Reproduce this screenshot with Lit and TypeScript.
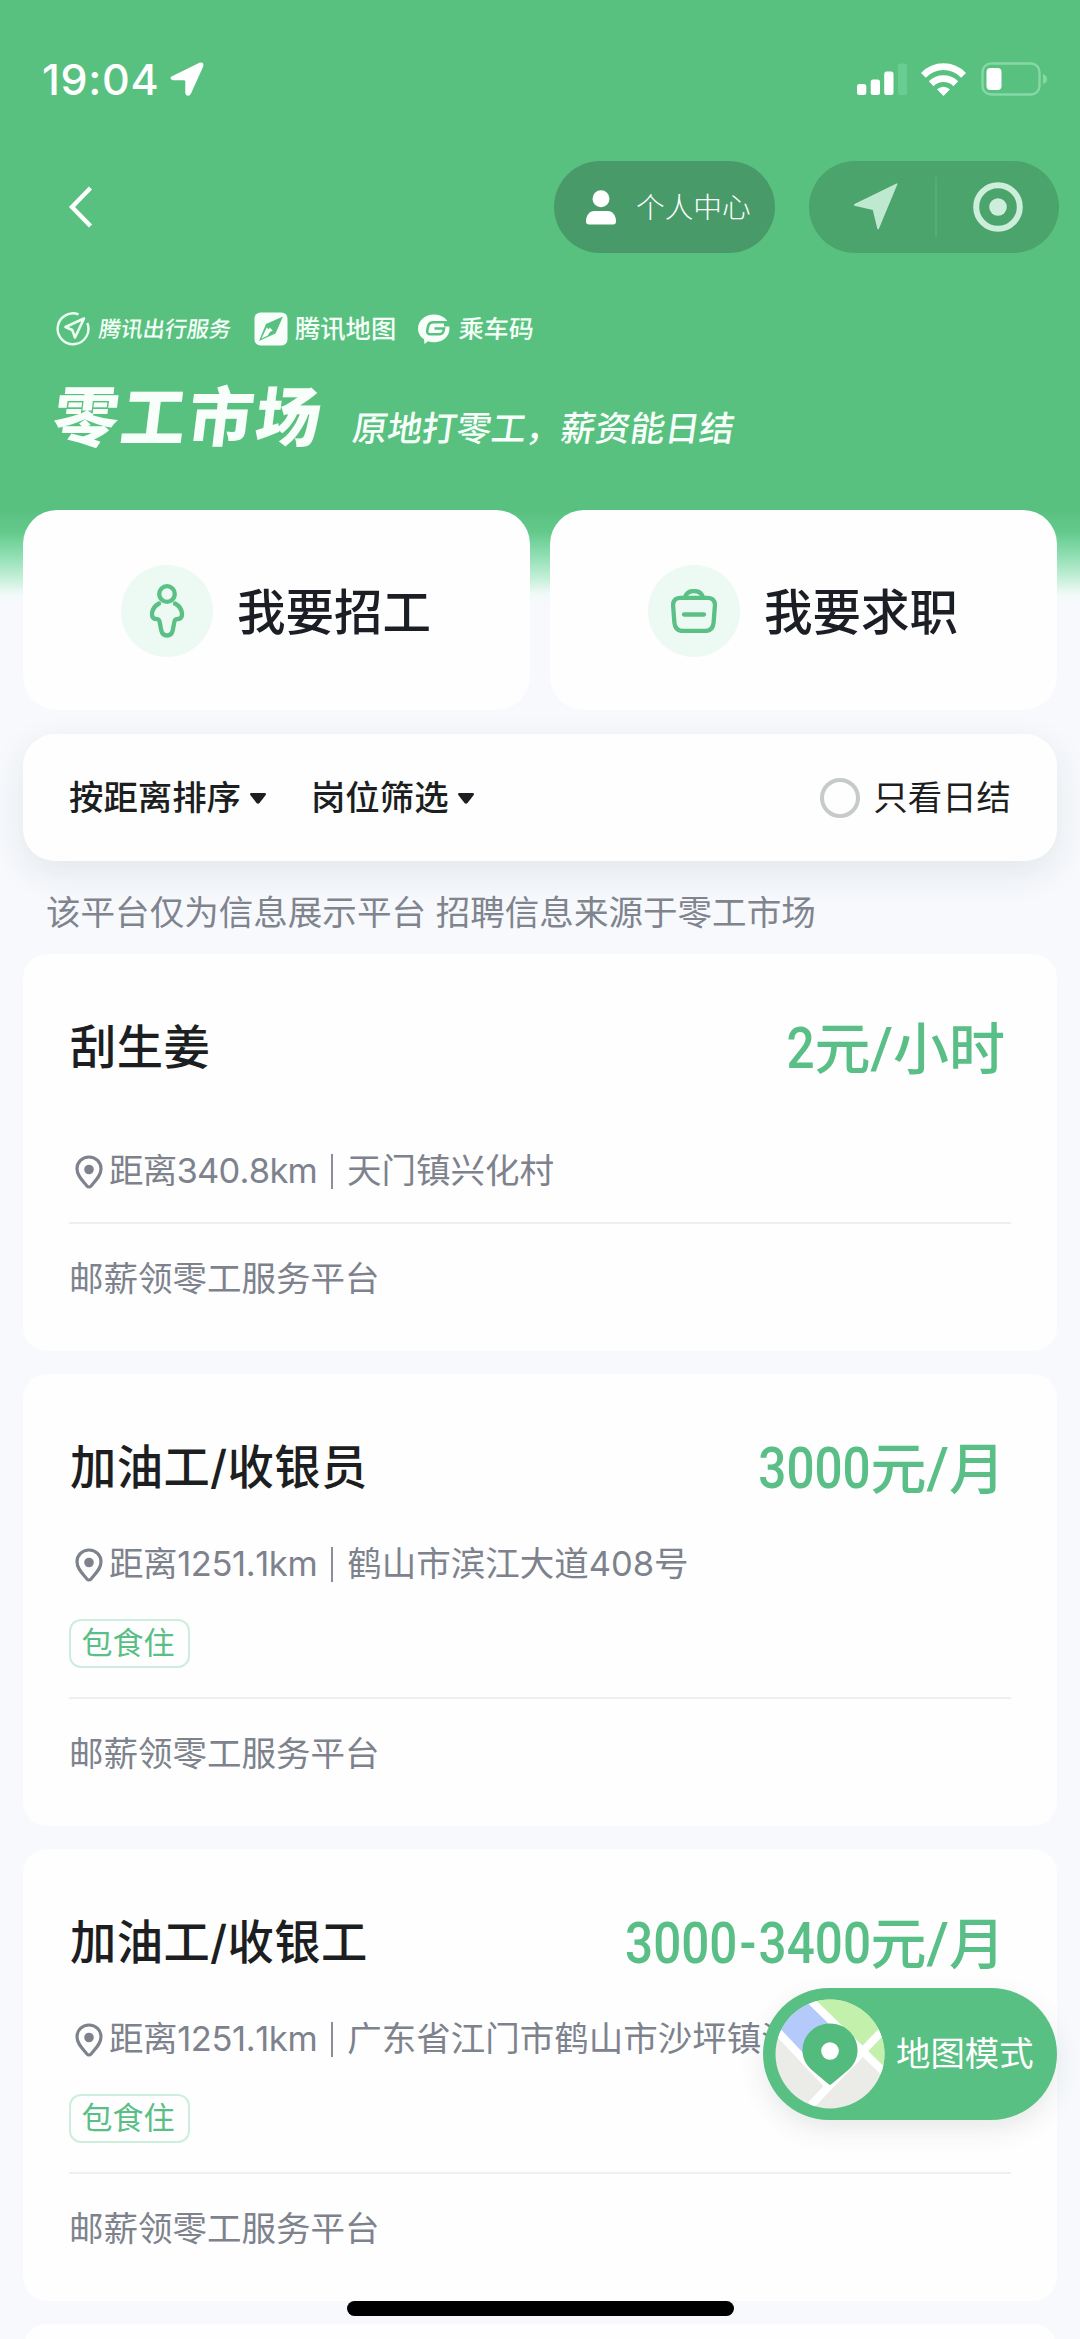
import { LitElement, html, css, svg, nothing } from "lit";
import { customElement, property } from "lit/decorators.js";

interface Job {
  title: string;
  amount: string;
  unit: string;
  distance: string;
  place: string;
  tags: string[];
  company: string;
}

const jobs: Job[] = [
  { title: "刮生姜", amount: "2", unit: "小时", distance: "340.8km", place: "天门镇兴化村", tags: [], company: "邮薪领零工服务平台" },
  { title: "加油工/收银员", amount: "3000", unit: "月", distance: "1251.1km", place: "鹤山市滨江大道408号", tags: ["包食住"], company: "邮薪领零工服务平台" },
  { title: "加油工/收银工", amount: "3000-3400", unit: "月", distance: "1251.1km", place: "广东省江门市鹤山市沙坪镇沿", tags: ["包食住"], company: "邮薪领零工服务平台" },
];

@customElement("job-card")
export class JobCard extends LitElement {
  @property({ attribute: false }) job!: Job;

  static styles = css`
    :host { display: block; }
    .card {
      box-sizing: border-box;
      background: #fefefe;
      border-radius: 24px;
      padding: 60px 46px 49px;
    }
    .head { display: flex; justify-content: space-between; height: 66px; align-items: center; }
    .title { font-size: 46.3px; font-weight: 500; color: #1c1e21; white-space: nowrap; line-height: 66px; letter-spacing: 0.4px; padding-left: 1px; }
    .price {
      display: flex; align-items: center; padding-right: 6px; padding-top: 4px;
      font-size: 56px; font-weight: 500; color: #5abf86; white-space: nowrap; line-height: 66px;
    }
    .amount, .slash { font-family: Roboto, "Noto Sans CJK SC", sans-serif; font-size: 57.5px; }
    .amount { transform: scaleX(0.86); transform-origin: right center; }
    .dash { margin: 0 2.5px; }
    .where {
      display: flex; align-items: center; height: 46px; margin-top: 41px;
      font-size: 34.5px; line-height: 46px; color: #7d828d; white-space: nowrap;
    }
    .plain .where { margin-top: 68px; }
    .pin { width: 28px; height: 34px; margin: 1px 6px 0 6px; flex: none; }
    .dist { letter-spacing: -0.4px; font-kerning: none; }
    .plain .dist { letter-spacing: -0.75px; }
    .bar { width: 2px; height: 35px; background: #8a8f99; margin: 0 14px 0 14px; }
    .tags { display: flex; margin-top: 32px; height: 49px; }
    .tag {
      box-sizing: border-box; height: 49px; width: 121px; border: 2px solid #cdeedd; border-radius: 12px;
      display: flex; align-items: center; justify-content: center;
      font-size: 31px; color: #5abf86; padding: 0 3px 1px 0;
    }
    .company {
      border-top: 2px solid #efeff1; margin-top: 29px; padding-top: 32px; height: 46px; line-height: 46px;
      font-size: 34.5px; color: #7d828d;
    }
    .plain .company { margin-top: 28px; }
  `;

  render() {
    const j = this.job;
    const amount = j.amount.split("-").map((part, i) => (i ? html`<span class="dash">-</span>${part}` : part));
    return html`<div class="card ${j.tags.length ? "" : "plain"}">
      <div class="head">
        <span class="title">${j.title}</span>
        <span class="price"><span class="amount">${amount}</span><span>元</span><span class="slash">/</span><span>${j.unit}</span></span>
      </div>
      <div class="where">
        <svg class="pin" viewBox="0 0 28 34" fill="none">
          <path d="M14 2C7.2 2 2 7.2 2 13.8c0 7 5.400 11.700 9.700 16.900q2.300 2.600 4.600 0C20.600 25.500 26 20.800 26 13.800 26 7.200 20.800 2 14 2z" stroke="#7d828d" stroke-width="3.200"/>
          <circle cx="14" cy="14.500" r="4.800" fill="#7d828d"/>
        </svg>
        <span class="dist">距离${j.distance}</span><span class="bar"></span><span>${j.place}</span>
      </div>
      ${j.tags.length ? html`<div class="tags">${j.tags.map((t) => html`<span class="tag">${t}</span>`)}</div>` : nothing}
      <div class="company">${j.company}</div>
    </div>`;
  }
}

const caret = html`<svg class="caret" viewBox="0 0 16 11"><path d="M1 0h14q1.500.6.700 2L9.500 10q-1.500 1.600-3 0L.3 2Q-.5.6 1 0z" fill="#1c1e21"/></svg>`;

const personIcon = svg`
  <circle cx="17" cy="10" r="7.800"/>
  <path d="M9 19.500C4.500 22 2 26 2 30.500c0 3 2 4.500 5 4.700 1.700.1 2.300 1 2.600 2.500l1.600 8.300c.7 3.500 2.600 5.500 5.800 5.500s5.100-2 5.800-5.500l1.600-8.300c.3-1.500.9-2.400 2.600-2.500 3-.2 5-1.700 5-4.700 0-4.500-2.500-8.500-7-11"/>`;

const bagIcon = svg`
  <path d="M14 8.500c1-4 4-6.500 9-6.500s8 2.500 9 6.500"/>
  <path d="M9.500 8.800h27c5 0 7.800 3 7.400 7.800l-1.300 17c-.5 5.500-3.300 8.400-8.600 8.400H12c-5.300 0-8.100-2.900-8.600-8.400l-1.300-17C1.700 11.800 4.500 8.800 9.500 8.800z"/>
  <path d="M13 25.500h20"/>`;

@customElement("app-root")
export class AppRoot extends LitElement {
  static styles = css`
    :host {
      display: flex; flex-direction: column; position: relative; box-sizing: border-box;
      width: 1080px; height: 2339px; overflow: hidden;
      font-family: Inter, "Noto Sans CJK SC", sans-serif; line-height: 1.3;
      color: #1c1e21;
      background: linear-gradient(#59c180 0, #59c180 510px, #63ca8c 532px, #90dfb3 556px, #c5efd8 578px, #f3faf9 595px, #f7f9fd 604px);
    }
    :host > * { flex: none; }
    .status { display: flex; align-items: center; height: 58px; margin-top: 50px; padding: 0 33px 0 42px; color: #fff; }
    .time { font-size: 43px; font-weight: 500; letter-spacing: 0.7px; line-height: 58px; }
    .loc { width: 34px; height: 34px; margin-left: 11px; margin-right: auto; }
    .signal { width: 50px; height: 32px; margin-right: 14px; }
    .wifi { width: 45px; height: 33px; margin-right: 15px; }
    .battery { width: 66px; height: 34px; }

    .nav { display: flex; align-items: center; height: 92px; margin-top: 53px; padding: 0 21px 0 68px; }
    .back { width: 26px; height: 44px; margin-right: auto; }
    .me {
      box-sizing: border-box; width: 221px; height: 92px; border-radius: 46px; background: #489b69;
      display: flex; align-items: center; padding: 1px 0 0 32px; gap: 20px;
      font-size: 28.7px; font-weight: 300; color: #fff; margin-right: 34px; white-space: nowrap;
    }
    .me svg { width: 30px; height: 35px; }
    .capsule { width: 250px; height: 92px; border-radius: 46px; background: #4aa46b; display: flex; align-items: center; }
    .capsule .go { width: 46px; height: 48px; margin-left: 44px; }
    .capsule i { width: 2px; height: 60px; background: #57ad76; margin: 0 36px; }
    .capsule .target { width: 50px; height: 50px; }

    .brands { display: flex; align-items: center; height: 34px; margin-top: 59px; padding-left: 56px; color: #f4fff8; }
    .brands svg { width: 34px; height: 34px; flex: none; }
    .brands span { white-space: nowrap; font-weight: 500; line-height: 34px; }
    .b1 { font-size: 22px; margin: 0 23px 0 9px; transform: skewX(-8deg); }
    .b2 { font-size: 25.3px; margin: 0 21px 0 7px; }
    .b3 { font-size: 25px; margin-left: 8px; transform: skewX(-4deg); }

    .headline { display: flex; height: 70px; margin-top: 36px; padding-left: 54px; color: #f8fffa; white-space: nowrap; }
    .name { font-size: 65px; font-weight: 900; letter-spacing: 2.300px; line-height: 71px; transform: skewX(-7deg); }
    .slogan { font-size: 34.700px; font-weight: 500; line-height: 46px; margin: 23px 0 0 30px; transform: skewX(-8deg); }

    .actions { display: grid; grid-template-columns: 1fr 1fr; gap: 20px; margin: 58px 23px 0; }
    .action {
      height: 200px; border-radius: 34px; background: #fefefe;
      display: flex; align-items: center; box-sizing: border-box; padding: 2px 0 0 98px; gap: 24px;
      font-size: 48.500px; font-weight: 500; color: #1c1e26; white-space: nowrap;
    }
    .action span { padding-top: 4px; }
    .disc { width: 92px; height: 92px; border-radius: 50%; background: #ecfaf3; display: flex; align-items: center; justify-content: center; }
    .disc svg { fill: none; stroke: #5ac085; stroke-width: 4.300; stroke-linecap: round; stroke-linejoin: round; }
    .person { width: 34px; height: 54px; }
    .bag { width: 46px; height: 44px; }

    .filter {
      display: flex; align-items: center; height: 127px; margin: 24px 23px 0; border-radius: 32px; background: #fefefe;
      box-shadow: 0 12px 36px rgba(30, 50, 45, 0.09); box-sizing: border-box; padding: 1px 46px 0 46px;
      font-size: 34.400px; white-space: nowrap;
    }
    .filter b { font-weight: 500; padding-top: 1px; }
    .caret { width: 16px; height: 11px; margin: 1px 45px 0 9px; }
    .radio { box-sizing: border-box; width: 40px; height: 40px; border: 4px solid #c6cbc9; border-radius: 50%; margin: 0 13px 0 auto; }
    .note { margin: 29px 46px 0; height: 46px; line-height: 46px; font-size: 34.550px; color: #7f848e; white-space: nowrap; }
    .list { display: flex; flex-direction: column; gap: 23px; margin: 18px 23px 0; }
    .next { height: 60px; border-radius: 24px; background: #fefefe; }

    .map {
      position: absolute; left: 763px; top: 1988px; width: 294px; height: 132px; border-radius: 66px;
      background: #59c083; box-shadow: 0 10px 26px rgba(30, 60, 40, 0.1);
      display: flex; align-items: center; box-sizing: border-box; padding-left: 12px; gap: 11px;
      font-size: 34.400px; color: #fff; white-space: nowrap;
    }
    .map svg { width: 110px; height: 110px; }
    .home { position: absolute; left: 347px; top: 2301px; width: 387px; height: 15px; border-radius: 8px; background: #000; }
  `;

  render() {
    return html`
      <div class="status">
        <span class="time">19:04</span>
        <svg class="loc" viewBox="0 0 34 34"><path d="M2.500 14 29.500.7Q34.200-.5 33.300 4.300L21 31.500q-1.200 2.500-3.200 2.300-2.500-.3-2.500-3V19.500q0-1.300-1.300-1.300H3.200q-2.400-.2-2.700-2.100 0-1.500 2-2.100z" fill="#fff"/></svg>
        <svg class="signal" viewBox="0 0 50 32" fill="#fff">
          <rect x="0" y="21" width="9.300" height="11" rx="2.500"/><rect x="13.700" y="16.500" width="9.300" height="15.500" rx="2.500"/>
          <rect x="27.200" y="8.500" width="9.300" height="23.500" rx="2.500"/><rect x="41" y="0.500" width="9" height="31.500" rx="2.500" fill="#67cd90"/>
        </svg>
        <svg class="wifi" viewBox="0 0 45 33">
          <g fill="none" stroke="#fff" stroke-width="6.800"><path d="M2.400 12.300C13.500.8 31.500.8 42.600 12.300"/><path d="M10.200 20.700c7-6.700 17.600-6.700 24.600 0"/></g>
          <path d="M16 26.300q6.500-5.300 13 0L22.500 33z" fill="#fff"/>
        </svg>
        <svg class="battery" viewBox="0 0 66 34">
          <rect x="1.500" y="1.500" width="57" height="31" rx="8.500" fill="none" stroke="#86d8a6" stroke-width="2.400"/>
          <rect x="5.500" y="6" width="15" height="22" rx="4" fill="#fff"/>
          <path d="M62 12q4 1.500 4 5t-4 5z" fill="#86d8a6"/>
        </svg>
      </div>
      <div class="nav">
        <svg class="back" viewBox="0 0 26 44"><path d="M22.500 3 4 22l18.500 19" fill="none" stroke="#fff" stroke-width="4.400"/></svg>
        <div class="me">
          <svg viewBox="0 0 30 35" fill="#fff"><circle cx="15" cy="8.800" r="8.500"/><path d="M8.500 21h13C27 21 30 26 30 31.200q0 3.300-3 3.300H3q-3 0-3-3.300C0 26 3 21 8.500 21z"/></svg>
          <span>个人中心</span>
        </div>
        <div class="capsule">
          <svg class="go" viewBox="0 0 46 48"><path d="M44.500 1 26 45.500q-1 2-1.800-.2L19.800 27 1.500 22.800Q0 22 1.500 21L43.500.6q1.400-.4 1 .4z" fill="#bfe8d0"/></svg>
          <i></i>
          <svg class="target" viewBox="0 0 50 50"><circle cx="25" cy="25" r="21.800" fill="none" stroke="#cdeedb" stroke-width="6"/><circle cx="25" cy="25" r="8.800" fill="#cdeedb"/></svg>
        </div>
      </div>
      <div class="brands">
        <svg viewBox="0 0 34 34" fill="none" stroke="#ecfff3" stroke-width="2.400">
          <path d="M22.500 2.400A15.400 15.400 0 1 0 31.300 11"/>
          <path d="M28 6.500 9.500 15l6.700 3L19 25.500z" stroke-width="2.600" stroke-linejoin="round"/>
        </svg>
        <span class="b1">腾讯出行服务</span>
        <svg viewBox="0 0 34 34"><rect x="0.500" y="0.500" width="33" height="33" rx="6" fill="#f8fffa"/><path d="M29 4.500 12 12 5 29 21.500 21.500z" fill="#59c180"/><path d="M12.800 15.500 7.500 26.500l6-2.700 3.200-4.800z" fill="#f8fffa"/><path d="m15.700 15.500 3 3-2 1.200-2-2z" fill="#f8fffa"/></svg>
        <span class="b2">腾讯地图</span>
        <svg viewBox="0 0 34 34"><path d="M17 2.500c8.500 0 15.500 5.500 15.500 14S25.500 30.300 17 30.300c-2.300 0-4.300-.3-6-1L7.500 32 7 27.300C3.300 24.800 1 21.300 1 16.700 1 8.300 8.500 2.500 17 2.500z" fill="#f8fffa"/><path d="M28 10.200H16.500q-4.200 0-5.200 3.500l-1 4.300Q9.500 22.300 13.500 22.300H22q3.500 0 4.300-2.800l.7-3h-9.500" fill="none" stroke="#59c180" stroke-width="2.600"/><path d="M27 9h7v5.500h-7z" fill="#59c180"/></svg>
        <span class="b3">乘车码</span>
      </div>
      <div class="headline"><span class="name">零工市场</span><span class="slogan">原地打零工，薪资能日结</span></div>
      <div class="actions">
        <div class="action"><div class="disc"><svg class="person" viewBox="0 0 34 54">${personIcon}</svg></div><span>我要招工</span></div>
        <div class="action"><div class="disc"><svg class="bag" viewBox="0 0 46 44">${bagIcon}</svg></div><span>我要求职</span></div>
      </div>
      <div class="filter">
        <b>按距离排序</b>${caret}<b>岗位筛选</b>${caret}
        <span class="radio"></span><span>只看日结</span>
      </div>
      <div class="note">该平台仅为信息展示平台 招聘信息来源于零工市场</div>
      <div class="list">
        ${jobs.map((j) => html`<job-card .job=${j}></job-card>`)}
        <div class="next"></div>
      </div>
      <div class="map">
        <svg viewBox="0 0 110 110">
          <defs><clipPath id="disc"><circle cx="55" cy="55" r="54.500"/></clipPath></defs>
          <g clip-path="url(#disc)">
            <rect width="110" height="110" fill="#ebebe8"/>
            <path d="M0 31 34 0 85 50 52 82z" fill="#b3cafb"/>
            <path d="M38 0h72v76z" fill="#c3f1ab"/>
            <g stroke="#fff" stroke-width="8" fill="none"><path d="M34 0 112 76"/><path d="M0 30 53 86"/><path d="M110 29 36 106"/></g>
          </g>
          <path d="M55 24.500c15.500 0 27.500 12 27.500 27 0 8-3.500 14-9 19.300L62 80.500 56.300 85.300q-1.300 1-2.600 0L48 80.500 36.500 70.800C31 65.500 27.500 59.500 27.500 51.500c0-15 12-27 27.500-27z" fill="#53bb7d"/>
          <circle cx="55" cy="52" r="8.800" fill="#fff"/>
        </svg>
        <span>地图模式</span>
      </div>
      <div class="home"></div>
    `;
  }
}
